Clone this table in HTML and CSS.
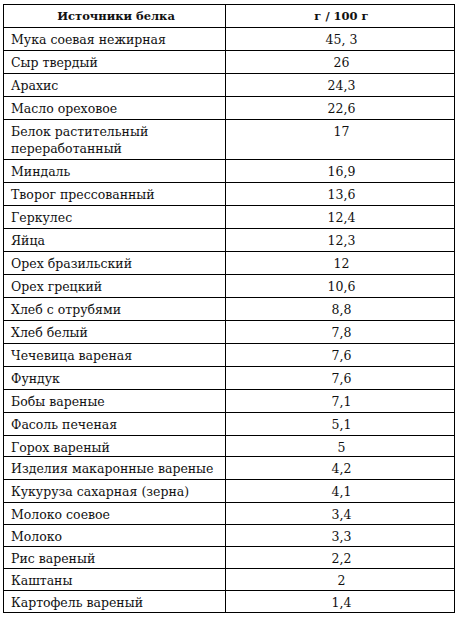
FILE: index.html
```html
<!DOCTYPE html>
<html lang="ru">
<head>
<meta charset="utf-8">
<title>Источники белка</title>
<link rel="stylesheet" href="styles.css">
</head>
<body>
<table class="protein">
  <thead>
    <tr class="head">
      <th class="name">Источники белка</th>
      <th class="val">г / 100 г</th>
    </tr>
  </thead>
  <tbody>
    <tr><td class="name">Мука соевая нежирная</td><td class="val">45, 3</td></tr>
    <tr><td class="name">Сыр твердый</td><td class="val">26</td></tr>
    <tr><td class="name">Арахис</td><td class="val">24,3</td></tr>
    <tr><td class="name">Масло ореховое</td><td class="val">22,6</td></tr>
    <tr class="tall"><td class="name">Белок растительный<br>переработанный</td><td class="val">17</td></tr>
    <tr><td class="name">Миндаль</td><td class="val">16,9</td></tr>
    <tr><td class="name">Творог прессованный</td><td class="val">13,6</td></tr>
    <tr><td class="name">Геркулес</td><td class="val">12,4</td></tr>
    <tr><td class="name">Яйца</td><td class="val">12,3</td></tr>
    <tr><td class="name">Орех бразильский</td><td class="val">12</td></tr>
    <tr><td class="name">Орех грецкий</td><td class="val">10,6</td></tr>
    <tr><td class="name">Хлеб с отрубями</td><td class="val">8,8</td></tr>
    <tr><td class="name">Хлеб белый</td><td class="val">7,8</td></tr>
    <tr><td class="name">Чечевица вареная</td><td class="val">7,6</td></tr>
    <tr><td class="name">Фундук</td><td class="val">7,6</td></tr>
    <tr><td class="name">Бобы вареные</td><td class="val">7,1</td></tr>
    <tr><td class="name">Фасоль печеная</td><td class="val">5,1</td></tr>
    <tr class="short"><td class="name">Горох вареный</td><td class="val">5</td></tr>
    <tr><td class="name">Изделия макаронные вареные</td><td class="val">4,2</td></tr>
    <tr><td class="name">Кукуруза сахарная (зерна)</td><td class="val">4,1</td></tr>
    <tr class="compact"><td class="name">Молоко соевое</td><td class="val">3,4</td></tr>
    <tr class="compact"><td class="name">Молоко</td><td class="val">3,3</td></tr>
    <tr class="compact"><td class="name">Рис вареный</td><td class="val">2,2</td></tr>
    <tr class="compact"><td class="name">Каштаны</td><td class="val">2</td></tr>
    <tr class="compact"><td class="name">Картофель вареный</td><td class="val">1,4</td></tr>
  </tbody>
</table>
</body>
</html>
```

FILE: styles.css
```css
html, body {
  margin: 0;
  padding: 0;
  background: #fff;
}

body {
  padding: 4px 0 0 3px;
  font-family: "DejaVu Serif", "Liberation Serif", serif;
  font-size: 12.5px;
  color: #111;
}

.protein {
  border-collapse: collapse;
  width: 452px;
  table-layout: fixed;
}

.protein th,
.protein td {
  border: 1px solid #000;
  height: 23px;
  box-sizing: border-box;
  padding: 3px 4px 0 7px;
  line-height: 17px;
  vertical-align: top;
  white-space: nowrap;
}

.protein .name {
  width: 222px;
  text-align: left;
}

.protein .val {
  text-align: center;
}

.protein th {
  font-weight: bold;
  font-size: 11.5px;
  text-align: center;
}

.protein th.name {
  text-align: center;
}

.protein .tall td {
  height: 40px;
}

.protein .short td {
  height: 21px;
}

.protein .compact td {
  height: 22px;
}
```
